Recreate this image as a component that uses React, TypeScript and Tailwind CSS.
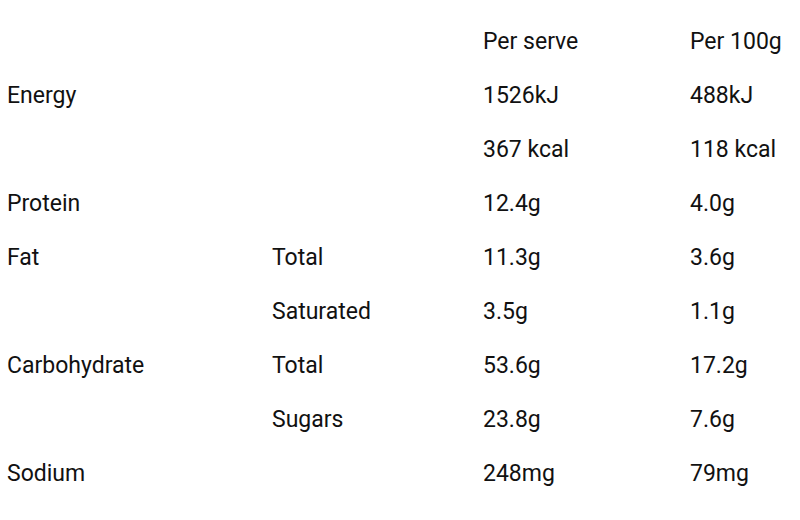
const rows: [string, string, string, string][] = [
  ['', '', 'Per serve', 'Per 100g'],
  ['Energy', '', '1526kJ', '488kJ'],
  ['', '', '367 kcal', '118 kcal'],
  ['Protein', '', '12.4g', '4.0g'],
  ['Fat', 'Total', '11.3g', '3.6g'],
  ['', 'Saturated', '3.5g', '1.1g'],
  ['Carbohydrate', 'Total', '53.6g', '17.2g'],
  ['', 'Sugars', '23.8g', '7.6g'],
  ['Sodium', '', '248mg', '79mg'],
];

export default function App() {
  return (
    <div className="h-[520px] w-[800px] bg-white pt-[15px] font-['Roboto',sans-serif] text-[23px] text-[#111]">
      {rows.map((r, i) => (
        <div key={i} className="grid h-[54px] grid-cols-[265px_211px_207px_1fr] items-center pl-[7px]">
          {r.map((c, j) => (
            <div key={j}>{c}</div>
          ))}
        </div>
      ))}
    </div>
  );
}
